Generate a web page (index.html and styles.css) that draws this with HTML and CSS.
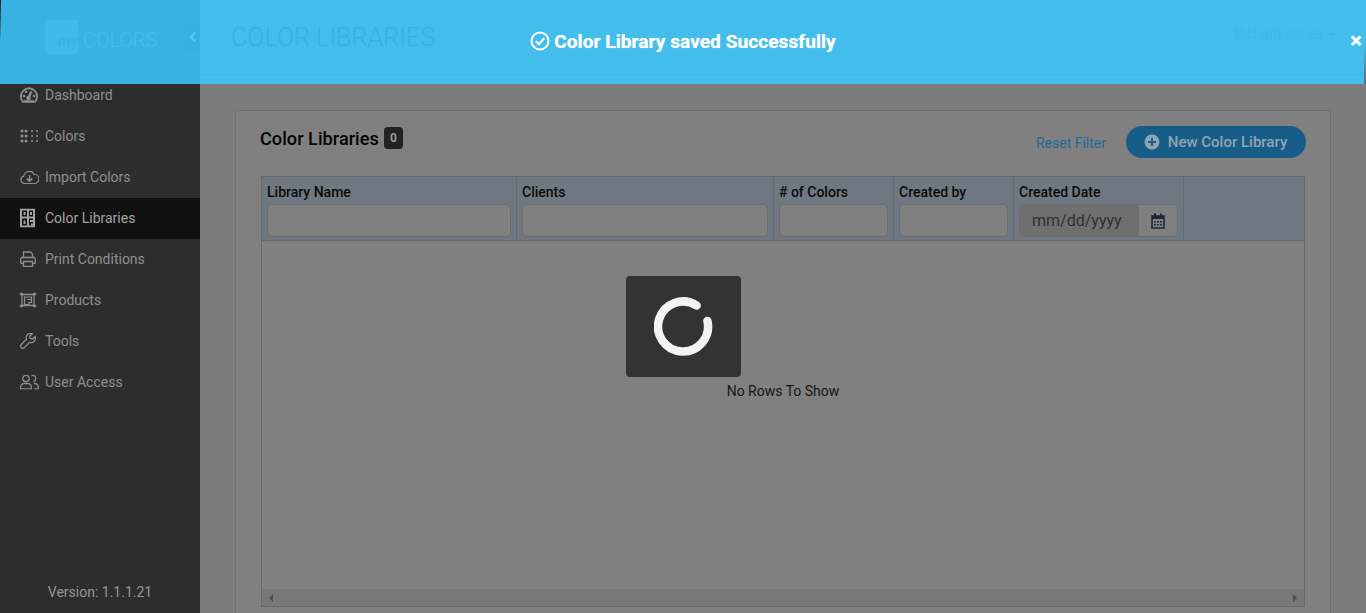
FILE: index.html
```html
<!DOCTYPE html>
<html lang="en">
<head>
    <meta charset="UTF-8">
    <meta name="viewport" content="width=device-width, initial-scale=1.0">
    <title>Color Libraries</title>
    <link rel="stylesheet" href="styles.css">
</head>
<body>
    <aside class="sidebar">
        <div class="brand">
            <div class="logo"><span class="logo-box">my</span><span class="logo-text">COLORS</span></div>
            <div class="collapse">
                <svg width="8" height="12" viewBox="0 0 8 12"><path d="M6 1.5 2 6l4 4.5" fill="none" stroke="#a8e2f8" stroke-width="2.4"/></svg>
            </div>
        </div>
        <ul class="nav">
            <li class="nav-item">
                <svg class="nav-icon" width="18" height="16" viewBox="0 0 18 16"><path d="M3 14.800A8.100 8.100 0 1 1 15 14.800Z" fill="none" stroke="currentColor" stroke-width="1.800"/><path d="M8.500 10.500 11.500 4.500" stroke="currentColor" stroke-width="2.400"/><circle cx="8.500" cy="11" r="2.200" fill="currentColor"/><circle cx="4" cy="9" r="1.300" fill="currentColor"/><circle cx="6" cy="4.800" r="1.300" fill="currentColor"/><circle cx="14" cy="9" r="1.300" fill="currentColor"/><path d="M4 14h10" stroke="currentColor" stroke-width="1.500"/></svg>
                <span>Dashboard</span>
            </li>
            <li class="nav-item">
                <svg class="nav-icon" width="19" height="14" viewBox="0 0 19 14"><g fill="currentColor"><circle cx="2" cy="2" r="1.500"/><circle cx="6" cy="2" r="1.500"/><circle cx="2" cy="7" r="1.500"/><circle cx="6" cy="7" r="1.500"/><circle cx="2" cy="12" r="1.500"/><circle cx="6" cy="12" r="1.500"/><circle cx="12" cy="2" r="1"/><circle cx="17" cy="2" r="1"/><circle cx="12" cy="7" r="1"/><circle cx="17" cy="7" r="1"/><circle cx="12" cy="12" r="1"/><circle cx="17" cy="12" r="1"/></g></svg>
                <span>Colors</span>
            </li>
            <li class="nav-item">
                <svg class="nav-icon" width="19" height="16" viewBox="0 0 19 16"><path d="M5 14.500H4.500A3.700 3.700 0 0 1 3.800 7.200 5.500 5.500 0 0 1 14.200 5.500 4.500 4.500 0 0 1 14.500 14.500Z" fill="none" stroke="currentColor" stroke-width="1.200"/><path d="M9.500 6v6M6.800 9.600l2.700 2.700 2.700-2.700" fill="none" stroke="currentColor" stroke-width="1.500"/></svg>
                <span>Import Colors</span>
            </li>
            <li class="nav-item active">
                <svg class="nav-icon" width="15" height="19" viewBox="0 0 15 19"><path fill-rule="evenodd" fill="currentColor" d="M0 0h15v19H0ZM2 2v6h5V2ZM9 2v6h4V2ZM2 10v7h5v-7ZM9 10v7h4v-7Z"/><path d="M3.500 3.500h2v3h-2ZM10 3.500h2v3h-2ZM3.500 12h2v3.500h-2ZM10 11.500h3v2h-3ZM11 15h2v2h-2Z" fill="currentColor"/></svg>
                <span>Color Libraries</span>
            </li>
            <li class="nav-item">
                <svg class="nav-icon" width="16" height="16" viewBox="0 0 16 16"><path d="M3.500 6.500V1h7l2 2v3.500M3.500 12.500H2a1.300 1.300 0 0 1-1.300-1.300V8A1.700 1.700 0 0 1 2.500 6.500h11A1.700 1.700 0 0 1 15.300 8v3.200A1.300 1.300 0 0 1 14 12.500h-1.500M3.500 10.500h9v4.800h-9Z" fill="none" stroke="currentColor" stroke-width="1.300"/></svg>
                <span>Print Conditions</span>
            </li>
            <li class="nav-item">
                <svg class="nav-icon" width="16" height="15" viewBox="0 0 16 15"><path d="M2 2h12v11H2Z" fill="none" stroke="currentColor" stroke-width="1.300"/><path d="M4.500 4.500h7v5.500h-2.500v2H4.500ZM7 7h4" fill="none" stroke="currentColor" stroke-width="1.200"/><g fill="currentColor"><rect x="0" y="0" width="3" height="3" rx="1"/><rect x="13" y="0" width="3" height="3" rx="1"/><rect x="0" y="12" width="3" height="3" rx="1"/><rect x="13" y="12" width="3" height="3" rx="1"/></g></svg>
                <span>Products</span>
            </li>
            <li class="nav-item">
                <svg class="nav-icon" width="16" height="16" viewBox="0 0 16 16"><path d="M15 3.500 12.500 6 10.200 5.500 9.800 3.300 12.300.8A4.300 4.300 0 0 0 6.500 6.300L1.300 11.500A2.100 2.100 0 0 0 4.300 14.600L9.600 9.300A4.300 4.300 0 0 0 15 3.500Z" fill="none" stroke="currentColor" stroke-width="1.300"/></svg>
                <span>Tools</span>
            </li>
            <li class="nav-item">
                <svg class="nav-icon" width="19" height="15" viewBox="0 0 19 15"><circle cx="6" cy="4" r="3.200" fill="none" stroke="currentColor" stroke-width="1.300"/><path d="M.7 14.300v-1.800A3.500 3.500 0 0 1 4.200 9h3.600a3.500 3.500 0 0 1 3.500 3.500v1.800Z" fill="none" stroke="currentColor" stroke-width="1.300"/><path d="M11.500 1.100a3.100 3.100 0 1 1 1.800 5.900M14 9h.8a3.500 3.500 0 0 1 3.500 3.500v1.800h-4.500" fill="none" stroke="currentColor" stroke-width="1.300"/></svg>
                <span>User Access</span>
            </li>
        </ul>
        <div class="version">Version: 1.1.1.21</div>
    </aside>

    <div class="main">
        <header class="topbar">
            <h1>COLOR LIBRARIES</h1>
            <div class="user">Richard Jones<span class="caret"></span></div>
        </header>
        <div class="content">
            <section class="card">
                <div class="card-head">
                    <h2>Color Libraries</h2>
                    <span class="badge">0</span>
                    <a class="reset-link">Reset Filter</a>
                    <button class="btn-new">
                        <svg width="16" height="16" viewBox="0 0 16 16"><circle cx="8" cy="8" r="7.500" fill="#8fa5b3"/><path d="M8 4v8M4 8h8" stroke="#1a5e87" stroke-width="2"/></svg>
                        New Color Library
                    </button>
                </div>
                <div class="grid">
                    <div class="grid-head">
                        <div class="col col-name"><label>Library Name</label><input type="text"></div>
                        <div class="col col-clients"><label>Clients</label><input type="text"></div>
                        <div class="col col-count"><label># of Colors</label><input type="text"></div>
                        <div class="col col-by"><label>Created by</label><input type="text"></div>
                        <div class="col col-date">
                            <label>Created Date</label>
                            <div class="date-field">
                                <span class="date-text">mm/dd/yyyy</span>
                                <span class="date-btn">
                                    <svg width="14" height="16" viewBox="0 0 14 16"><path d="M1 3h12v12H1Z" fill="none" stroke="#1f2738" stroke-width="1.600"/><path d="M1 3h12v3H1ZM3 .5h2V3H3ZM9 .5h2V3H9Z" fill="#1f2738"/><path d="M3.200 8h1.800v1.600H3.200ZM6.100 8h1.800v1.600H6.100ZM9 8h1.800v1.600H9ZM3.200 11h1.800v1.600H3.200ZM6.100 11h1.800v1.600H6.100ZM9 11h1.800v1.600H9Z" fill="#1f2738"/></svg>
                                </span>
                            </div>
                        </div>
                        <div class="col col-rest"></div>
                    </div>
                    <div class="grid-body">No Rows To Show</div>
                    <div class="hscroll">
                        <span class="arrow-left"></span>
                        <span class="arrow-right"></span>
                    </div>
                </div>
            </section>
        </div>
    </div>

    <!-- loading box -->
    <div class="spinner-box">
        <svg width="60" height="60" viewBox="1 0.500 60 60"><path d="M54.400 24.400A25 25 0 1 1 43.600 9" fill="none" stroke="#f3f3f3" stroke-width="8.500" stroke-linecap="round"/></svg>
    </div>

    <!-- toast -->
    <div class="toast">
        <svg width="20" height="20" viewBox="0 0 20 20"><circle cx="10" cy="10" r="8.500" fill="none" stroke="#fff" stroke-width="2"/><path d="M5.800 10.300 8.800 13.200 14.300 7.300" fill="none" stroke="#fff" stroke-width="2.100"/></svg>
        <span>Color Library saved Successfully</span>
        <span class="toast-close">&times;</span>
    </div>
</body>
</html>
```

FILE: styles.css
```css
* {
    box-sizing: border-box;
}

html, body {
    height: 100%;
}

body {
    margin: 0;
    font-family: Roboto, 'Liberation Sans', sans-serif;
    font-size: 14px;
    background-color: #7c7c7c;
    color: #0c0c0c;
    display: flex;
    overflow: hidden;
}

/* sidebar */
.sidebar {
    width: 200px;
    flex-shrink: 0;
    background-color: #2d2d2d;
    display: flex;
    flex-direction: column;
    color: #8f8f8f;
}

.brand {
    height: 75px;
    display: flex;
    align-items: center;
    justify-content: space-between;
    padding-left: 45px;
}

.logo {
    display: flex;
    align-items: flex-end;
    height: 34px;
    margin-bottom: 1px;
}

.logo-box {
    width: 33px;
    height: 34px;
    border-radius: 4px 0 0 4px;
    background-color: #666;
    color: #2d2d2d;
    font-weight: 700;
    font-size: 15px;
    text-align: right;
    padding-top: 11px;
    line-height: 20px;
}

.logo-text {
    font-size: 20px;
    font-weight: 300;
    line-height: 28px;
    color: #757575;
    margin-left: 5px;
}

.collapse {
    width: 15px;
    height: 28px;
    margin-bottom: 1px;
    background-color: #222;
    display: flex;
    align-items: center;
    justify-content: center;
}

.nav {
    list-style: none;
    margin: 0;
    padding: 0;
    flex: 1;
}

.nav-item {
    height: 41px;
    padding: 0 0 2px 20px;
    display: flex;
    align-items: center;
    position: relative;
}

.nav-item.active {
    background-color: #111;
    color: #a2a2a2;
}

.nav-icon {
    position: absolute;
    left: 20px;
    top: calc(50% - 1px);
    transform: translateY(-50%);
}

.nav-item span {
    margin-left: 25px;
}

.version {
    text-align: center;
    color: #959595;
    height: 29px;
}

/* top bar */
.main {
    flex: 1;
    min-width: 0;
    display: flex;
    flex-direction: column;
}

.topbar {
    height: 75px;
    border-bottom: 1px solid #5f5f5f;
    display: flex;
    align-items: center;
    justify-content: space-between;
    padding: 0 30px 0 31px;
}

.topbar h1 {
    margin: 0;
    font-size: 25.2px;
    font-weight: 300;
    color: #222;
}

.user {
    color: #2f4f5f;
    margin-bottom: 7px;
}

.caret {
    display: inline-block;
    margin-left: 5px;
    vertical-align: 2px;
    border-top: 4px solid #2f4f5f;
    border-left: 4px solid transparent;
    border-right: 4px solid transparent;
}

/* card */
.content {
    flex: 1;
    padding: 35px 35px 0;
    min-height: 0;
}

.card {
    height: 520px;
    background-color: #808080;
    border: 1px solid #6f6f6f;
    border-radius: 2px;
    padding: 15px 24px 0 24px;
}

.card-head {
    height: 50px;
    display: flex;
    align-items: flex-start;
}

.card-head h2 {
    margin: 0;
    font-size: 18.2px;
    font-weight: 500;
    line-height: 26px;
    color: #050505;
}

.badge {
    margin: 1px 0 0 5px;
    width: 19px;
    height: 22px;
    border-radius: 4px;
    background-color: #222;
    color: #999;
    font-size: 12px;
    font-weight: 700;
    text-align: center;
    line-height: 22px;
}

.reset-link {
    margin: 9px 20px 0 auto;
    color: #1f6a99;
    line-height: 17px;
}

.btn-new {
    width: 180px;
    height: 32px;
    border: none;
    border-radius: 16px;
    background-color: #185d87;
    color: #8fa5b3;
    font-family: inherit;
    font-size: 15px;
    font-weight: 500;
    display: flex;
    align-items: center;
    justify-content: center;
    gap: 8px;
    padding: 0 1px 0 0;
}

/* grid */
.grid {
    width: 1044px;
    margin-left: 1px;
    height: 431px;
    border: 1px solid #646a70;
    display: flex;
    flex-direction: column;
}

.grid-head {
    height: 64px;
    display: flex;
    background-color: #6f7880;
    border-bottom: 1px solid #646a70;
    flex-shrink: 0;
}

.col {
    padding: 7px 5px 0 5px;
    border-right: 1px solid #646a70;
}

.col-name { width: 255px; }
.col-clients { width: 257px; }
.col-count { width: 120px; }
.col-by { width: 120px; }
.col-date { width: 170px; }
.col-rest { flex: 1; border-right: none; }

.col label {
    display: block;
    font-weight: 500;
    font-size: 14px;
    line-height: 16px;
    margin-bottom: 4px;
    color: #0a0a0a;
}

.col input {
    display: block;
    width: 100%;
    height: 33px;
    background-color: #808080;
    border: 1px solid #686e74;
    border-radius: 5px;
    padding: 0 8px;
}

.date-field {
    display: flex;
    height: 33px;
    border: 1px solid #686e74;
    border-radius: 5px;
    background-color: #808080;
    overflow: hidden;
}

.date-text {
    width: 119px;
    padding-left: 12px;
    background-color: #6f6f6f;
    color: #303030;
    font-size: 16px;
    line-height: 31px;
}

.date-btn {
    flex: 1;
    display: flex;
    align-items: center;
    justify-content: center;
}

.grid-body {
    flex: 1;
    padding-top: 142px;
    text-align: center;
    color: #161616;
    line-height: 17px;
}

.hscroll {
    height: 17px;
    background-color: #787878;
    display: flex;
    align-items: center;
    justify-content: space-between;
    padding: 0 7px;
    flex-shrink: 0;
}

.arrow-left {
    border-right: 4px solid #4e4e4e;
    border-top: 4px solid transparent;
    border-bottom: 4px solid transparent;
}

.arrow-right {
    border-left: 4px solid #4e4e4e;
    border-top: 4px solid transparent;
    border-bottom: 4px solid transparent;
}

/* spinner over the grid */
.spinner-box {
    position: absolute;
    left: 626px;
    top: 276px;
    width: 115px;
    height: 101px;
    border-radius: 4px;
    background-color: #333;
    display: flex;
    align-items: center;
    justify-content: center;
}

/* success message */
.toast {
    position: absolute;
    left: 0;
    top: 0;
    width: 100%;
    height: 84px;
    background-color: rgba(58, 201, 255, 0.86);
    color: #fff;
    font-size: 19.2px;
    font-weight: 700;
    text-shadow: 0 0 1px rgba(255, 255, 255, 0.6);
    display: flex;
    align-items: center;
    justify-content: center;
    gap: 4px;
    padding-bottom: 2px;
}

/* dark slivers at the window edges */
.toast::before {
    content: "";
    position: absolute;
    left: 0;
    top: 0;
    width: 1px;
    height: 40px;
    background: linear-gradient(#222, #40a0c8);
}

.toast::after {
    content: "";
    position: absolute;
    right: 0;
    top: 44px;
    width: 2px;
    height: 40px;
    background: linear-gradient(#43bdee, #666);
}

.toast-close {
    position: absolute;
    right: 4px;
    top: 29px;
    font-size: 22px;
    line-height: 24px;
}
```
